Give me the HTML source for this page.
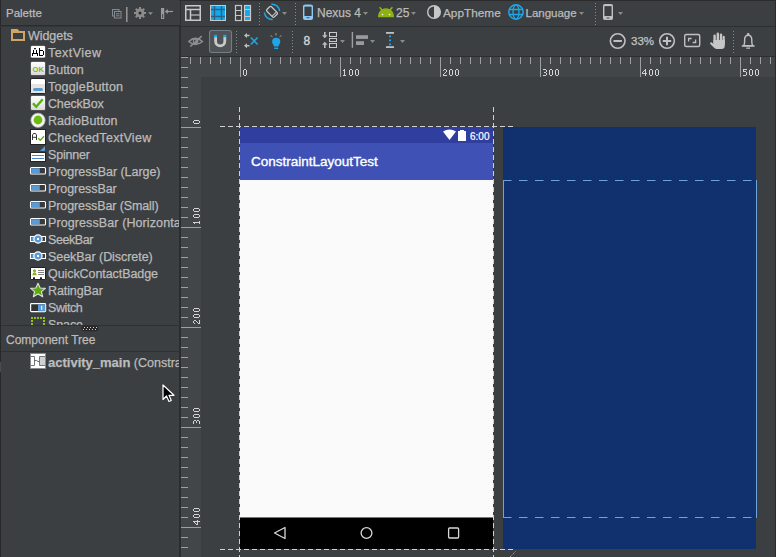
<!DOCTYPE html>
<html><head><meta charset="utf-8">
<style>
*{margin:0;padding:0;box-sizing:border-box}
html,body{width:776px;height:557px;overflow:hidden;background:#3c3f41;font-family:"Liberation Sans",sans-serif;color:#bbbbbb;position:relative}
.a{position:absolute}
.t{position:absolute;white-space:nowrap;font-size:12.5px;line-height:15px;-webkit-text-stroke:0.25px #bbbbbb}
#left{left:0;top:0;width:179px;height:557px;background:#3c3f41;overflow:hidden}
#topline{left:0;top:0;width:776px;height:1px;background:#2b2b2b}
#vdiv{left:179px;top:25px;width:2px;height:532px;background:#2b2d2e}
#vdiv2{left:180px;top:0;width:1px;height:27px;background:#2b2d2e}
.hb{position:absolute;left:0;width:179px;height:1px;background:#2e3032}
#canvas{left:201px;top:77px;width:575px;height:480px;background:#3c3f41}
#hruler{left:181px;top:57px;width:595px;height:21px;background:#434648}
#vruler{left:181px;top:57px;width:20px;height:500px;background:#434648}
.ico{position:absolute}
.rl{font-family:"Liberation Sans",sans-serif;font-size:10px;fill:#d0d0d0;letter-spacing:0.1px}
</style></head><body>
<div id="topline" class="a"></div>

<!-- LEFT PANEL -->
<div id="left" class="a">
  <div class="t" style="left:6px;top:6px;font-size:11.5px">Palette</div>
  <div class="hb" style="top:25px;background:#2a2c2d"></div>
  <div class="t" style="left:28px;top:29px;letter-spacing:-0.054px">Widgets</div>
  <div class="t" style="left:48px;top:46px;letter-spacing:0.446px">TextView</div>
  <div class="t" style="left:48px;top:63px;letter-spacing:-0.065px">Button</div>
  <div class="t" style="left:48px;top:80px;letter-spacing:0.182px">ToggleButton</div>
  <div class="t" style="left:48px;top:97px;letter-spacing:-0.171px">CheckBox</div>
  <div class="t" style="left:48px;top:114px;letter-spacing:0.065px">RadioButton</div>
  <div class="t" style="left:48px;top:131px;letter-spacing:0.289px">CheckedTextView</div>
  <div class="t" style="left:48px;top:148px;letter-spacing:-0.188px">Spinner</div>
  <div class="t" style="left:48px;top:165px;letter-spacing:-0.042px">ProgressBar (Large)</div>
  <div class="t" style="left:48px;top:182px;letter-spacing:-0.08px">ProgressBar</div>
  <div class="t" style="left:48px;top:199px;letter-spacing:-0.106px">ProgressBar (Small)</div>
  <div class="t" style="left:48px;top:216px;letter-spacing:0.1px">ProgressBar (Horizontal)</div>
  <div class="t" style="left:48px;top:233px;letter-spacing:-0.417px">SeekBar</div>
  <div class="t" style="left:48px;top:250px;letter-spacing:-0.049px">SeekBar (Discrete)</div>
  <div class="t" style="left:48px;top:267px;letter-spacing:-0.07px">QuickContactBadge</div>
  <div class="t" style="left:48px;top:284px;letter-spacing:-0.091px">RatingBar</div>
  <div class="t" style="left:48px;top:301px;letter-spacing:-0.415px">Switch</div>
  <div class="a" style="left:0;top:0;width:179px;height:325px;overflow:hidden">
    <div class="t" style="left:48px;top:318px;letter-spacing:-0.1px">Space</div>
  </div>
  <div class="hb" style="top:325px"></div>
  <div class="t" style="left:6px;top:333.4px;font-size:12px">Component Tree</div>
  <div class="hb" style="top:351px"></div>
  <div class="t" style="left:48px;top:355px"><b style="font-size:13px">activity_main</b> (ConstraintLayout)</div>
</div>

<svg class="a" style="left:0;top:0" width="179" height="557">
  <!-- header icons -->
  <rect x="112.5" y="9.5" width="6.5" height="6.5" fill="none" stroke="#7d8b98" stroke-width="1"/>
  <rect x="114.5" y="11.5" width="6.5" height="6.5" fill="#3c3f41" stroke="#8a8a8a" stroke-width="1"/>
  <path d="M116 13.8h3.5M116 15.8h3.5" stroke="#8a8a8a" stroke-width="1"/>
  <rect x="126" y="7" width="1.6" height="15" fill="#a6a6a6" opacity="0.8"/>
  <g fill="#8c8c8c">
    <circle cx="140" cy="13" r="4.4"/>
    <rect x="139" y="7" width="2" height="12"/><rect x="134" y="12" width="12" height="2"/>
    <rect x="139" y="7" width="2" height="12" transform="rotate(45 140 13)"/><rect x="139" y="7" width="2" height="12" transform="rotate(-45 140 13)"/>
  </g>
  <circle cx="140" cy="13" r="1.5" fill="#2b2b2b"/>
  <path d="M148 12.2h5l-2.5 2.8z" fill="#8a8a8a"/>
  <rect x="161" y="8" width="3.2" height="11" fill="#9a9a9a"/>
  <rect x="162.2" y="14" width="0.9" height="4" fill="#3c3f41"/>
  <path d="M165.3 11.5h7.7" stroke="#9a9a9a" stroke-width="1.2"/>
  <path d="M165 11.5l2.8 -2.5v5z" fill="#9a9a9a"/>

  <!-- Widgets folder -->
  <path d="M11 29 H17.6 L19.2 31 H25 V41 H11 Z M13 33 V39 H23 V33 Z" fill="#d2a662" fill-rule="evenodd"/>
  <!-- TextView -->
  <rect x="30.5" y="45.5" width="15" height="12.5" rx="1.5" fill="#fff" stroke="#2a2a2a" stroke-width="0.6"/>
  <g fill="#000"><rect x="34" y="48" width="2" height="1.3" opacity="0.85"/><rect x="33" y="50" width="1" height="3"/><rect x="36" y="50" width="1" height="3"/><rect x="32" y="53" width="6" height="1"/><rect x="32" y="53" width="1" height="3"/><rect x="37" y="53" width="1" height="3"/>
  <rect x="39" y="48" width="1" height="8"/><rect x="39" y="50" width="4" height="1"/><rect x="43" y="51" width="1" height="4"/><rect x="39" y="55" width="4" height="1"/></g>
  <!-- Button -->
  <defs><linearGradient id="gb" x1="0" y1="0" x2="0" y2="1"><stop offset="0" stop-color="#fff"/><stop offset="0.55" stop-color="#ececec"/><stop offset="1" stop-color="#d6d6d6"/></linearGradient></defs>
  <rect x="30.5" y="61.5" width="15" height="14" rx="1.5" fill="url(#gb)" stroke="#2a2a2a" stroke-width="0.6"/>
  <text x="32.6" y="72.4" font-family="Liberation Sans" font-size="7.5" font-weight="bold" fill="#7cb518">OK</text>
  <!-- ToggleButton -->
  <rect x="30.5" y="78.5" width="15" height="15" rx="1.5" fill="#fff" stroke="#222" stroke-width="1"/>
  <rect x="31" y="84" width="14" height="9" fill="#e6e4e1"/>
  <rect x="33" y="88" width="10" height="3" rx="1.5" fill="#5b9bd5"/>
  <!-- CheckBox -->
  <rect x="30.5" y="95.5" width="15" height="15" rx="1.5" fill="url(#gb)" stroke="#2a2a2a" stroke-width="0.6"/>
  <path d="M33 103.2l3.2 3.6l6.5 -7.5" fill="none" stroke="#55b20c" stroke-width="2.4"/>
  <!-- RadioButton -->
  <circle cx="38" cy="120.3" r="7.2" fill="#f4f4f4" stroke="#9a9a9a" stroke-width="0.8"/>
  <circle cx="38" cy="120" r="4.4" fill="#6cbc0f"/>
  <!-- CheckedTextView -->
  <rect x="30.5" y="129.5" width="15" height="15" fill="#fff" stroke="#222" stroke-width="1"/>
  <path d="M32.5 140v-5l1 -1.5h2l1 1.5v5M32.5 137.3h4" fill="none" stroke="#222" stroke-width="0.9"/>
  <path d="M38.3 138.3l2 2l3.7 -4" fill="none" stroke="#6aa51c" stroke-width="1.3"/>
  <!-- Spinner -->
  <path d="M40 151 L45 146 L45 151 Z" fill="#5b9bd5"/>
  <rect x="30.5" y="152.5" width="15" height="9" fill="#fff" stroke="#222" stroke-width="1"/>
  <path d="M32 155.5h12M32 158.5h12" stroke="#4b89c8" stroke-width="1"/>
  <!-- ProgressBars -->
  <g id="pb">
  <rect x="30.5" y="167.5" width="15" height="6.5" rx="1" fill="#3a3a3a" stroke="#fff" stroke-width="1.1"/>
  <rect x="31.2" y="168.2" width="8.6" height="5.1" fill="#5b9bd5"/>
  </g>
  <use href="#pb" y="17"/><use href="#pb" y="34"/><use href="#pb" y="51"/>
  <!-- SeekBars -->
  <g id="sb">
  <rect x="30.5" y="236.5" width="15" height="5" fill="#3a3a3a" stroke="#fff" stroke-width="1.1"/>
  <rect x="31.2" y="237.2" width="4" height="3.6" fill="#5b9bd5"/>
  <circle cx="38" cy="239" r="4.1" fill="#5b9bd5" stroke="#fff" stroke-width="1.2"/>
  <rect x="37" y="238" width="2" height="2" fill="#fff"/>
  </g>
  <use href="#sb" y="17"/>
  <!-- QuickContactBadge -->
  <rect x="30.5" y="267.5" width="15" height="12" rx="0.5" fill="#fff" stroke="#222" stroke-width="1"/>
  <circle cx="34.5" cy="270.8" r="1.6" fill="#8cb21a"/>
  <path d="M32.3 275.3 Q32.5 272.5 34.5 272.3 Q36.5 272.5 36.7 275.3 Z" fill="#8cb21a"/>
  <path d="M38 270.5h6M38 272.5h6M38 274.5h6" stroke="#777" stroke-width="0.9"/>
  <path d="M33 279.5v-1.5a1 1 0 0 1 2 0v1.5M40 279.5v-1.5a1 1 0 0 1 2 0v1.5" fill="#222"/>
  <!-- RatingBar -->
  <path d="M38 283.2 L40.2 288 L45.4 288.4 L41.4 291.7 L42.7 296.8 L38 294 L33.3 296.8 L34.6 291.7 L30.6 288.4 L35.8 288 Z" fill="#5bab0c" stroke="#e0e0e0" stroke-width="1.1" stroke-linejoin="round"/>
  <!-- Switch -->
  <rect x="30.6" y="303.6" width="15" height="8" rx="0.8" fill="#333" stroke="#fff" stroke-width="1.2"/>
  <rect x="38" y="304.3" width="7.3" height="7" fill="#5b9bd5"/>
  <rect x="41.2" y="305.8" width="1" height="4" fill="#fff"/>
  <!-- Space -->
  <g fill="#95c10f">
   <rect x="31" y="317" width="2" height="2"/><rect x="34" y="317" width="2" height="2"/><rect x="37" y="317" width="2" height="2"/><rect x="40" y="317" width="2" height="2"/><rect x="43" y="317" width="2" height="2"/>
   <rect x="31" y="320" width="2" height="2"/><rect x="43" y="320" width="2" height="2"/><rect x="31" y="323" width="2" height="2"/><rect x="43" y="323" width="2" height="2"/>
  </g>
  <!-- splitter grip -->
  <rect x="81.5" y="325.8" width="17" height="5.5" rx="2.7" fill="#242526" opacity="0.85"/><g fill="#d4d4d4"><rect x="84" y="327" width="1" height="1"/><rect x="87" y="327" width="1" height="1"/><rect x="90" y="327" width="1" height="1"/><rect x="93" y="327" width="1" height="1"/><rect x="96" y="327" width="1" height="1"/><rect x="83" y="329" width="1" height="1"/><rect x="86" y="329" width="1" height="1"/><rect x="89" y="329" width="1" height="1"/><rect x="92" y="329" width="1" height="1"/><rect x="95" y="329" width="1" height="1"/></g>
  <!-- activity_main icon -->
  <rect x="30.5" y="353.5" width="15" height="15" fill="#fff" stroke="#8a8a8a" stroke-width="1"/>
  <rect x="40" y="357" width="5" height="8" fill="#d0d0d0"/>
  <path d="M31 356.5h3.5v9h-3.5M45 356.5h-5.5v9h5.5" fill="none" stroke="#777" stroke-width="1"/>
  <path d="M34.5 360.5h2l1.5 1h1.5" fill="none" stroke="#666" stroke-width="1"/>
</svg>
<div class="a" style="left:0;top:0;width:1px;height:557px;background:#282828"></div>
<div class="a" style="left:0;top:26px;width:179px;height:1px;background:#333537"></div>
<div class="a" style="left:0;top:362px;width:1px;height:10px;background:#4a4d4f"></div>
<div id="vdiv" class="a"></div><div id="vdiv2" class="a"></div>


<!-- TOOLBAR -->
<div class="a" style="left:181px;top:26px;width:595px;height:1px;background:#2d2f30"></div>
<div class="a" style="left:181px;top:56px;width:595px;height:1px;background:#2d2f30"></div>
<svg class="a" style="left:0;top:0" width="776" height="56">
  <!-- row1: design -->
  <rect x="185.75" y="5.75" width="14.5" height="14.5" fill="none" stroke="#c8c8c8" stroke-width="1.5"/>
  <line x1="186" y1="9.5" x2="200" y2="9.5" stroke="#c8c8c8" stroke-width="1.5"/>
  <line x1="190.5" y1="9.5" x2="190.5" y2="20" stroke="#c8c8c8" stroke-width="1.5"/>
  <line x1="191" y1="15" x2="200" y2="15" stroke="#a8a8a8" stroke-width="1.5"/>
  <!-- blueprint -->
  <rect x="210.5" y="5.5" width="15" height="15" fill="#14a7ec" stroke="#c8c8c8" stroke-width="1"/>
  <path d="M214.5 6v14M221.5 6v14M211 9.5h14M211 16.5h14" stroke="#2a6286" stroke-width="1.4"/>
  <!-- both -->
  <rect x="235.5" y="5.5" width="6" height="15" fill="none" stroke="#c8c8c8" stroke-width="1.2"/>
  <path d="M235.5 10.5h6M235.5 15.5h6" stroke="#c8c8c8" stroke-width="1.2"/>
  <rect x="244.5" y="5.5" width="6" height="15" fill="#14a7ec" stroke="#c8c8c8" stroke-width="1.2"/>
  <path d="M244.5 9.5h6M244.5 16.5h6" stroke="#c8c8c8" stroke-width="1.2"/>
  <!-- dotted seps -->
  <path d="M259.5 3v22M295.5 3v22M595.5 3v22" stroke="#8a8a8a" stroke-width="1" stroke-dasharray="1 2"/>
  <!-- rotate -->
  <g transform="rotate(-45 272 11.85)"><rect x="268.8" y="6.6" width="6.4" height="10.5" rx="1.3" fill="none" stroke="#c8c8c8" stroke-width="1.3"/><path d="M268.8 15h6.4" stroke="#c8c8c8" stroke-width="1"/></g>
  <path d="M271.3 4.2 A7.6 7.6 0 0 1 279.6 11.1" fill="none" stroke="#1ea6e6" stroke-width="1.5"/>
  <path d="M272.7 19.4 A7.6 7.6 0 0 1 264.4 12.5" fill="none" stroke="#1ea6e6" stroke-width="1.5"/>
  <path d="M282 12h5l-2.5 3z" fill="#8a8a8a"/>
  <!-- phone blue -->
  <rect x="303.7" y="5.2" width="8.6" height="14" rx="1.8" fill="none" stroke="#8ec9f5" stroke-width="1.4"/>
  <rect x="303.5" y="16" width="9" height="3.4" rx="1" fill="#8ec9f5"/><rect x="306.5" y="17.3" width="3" height="0.9" fill="#3c3f41"/>
  <rect x="303.5" y="5" width="9" height="1.6" fill="#8ec9f5"/>
  <path d="M363 12h5l-2.5 3z" fill="#8a8a8a"/>
  <!-- android -->
  <path d="M378 17.2 C378 11.8 381.2 8.3 386 8.3 C390.8 8.3 394 11.8 394 17.2 Z" fill="#8fb113"/>
  <path d="M379.6 7.2l2.6 3M392.4 7.2l-2.6 3" stroke="#8fb113" stroke-width="1.6"/>
  <rect x="381.8" y="13.9" width="1.3" height="1.3" fill="#fff"/><rect x="388.9" y="13.9" width="1.3" height="1.3" fill="#fff"/>
  <path d="M411 12h5l-2.5 3z" fill="#8a8a8a"/>
  <!-- theme -->
  <circle cx="434" cy="12" r="6.3" fill="none" stroke="#c8c8c8" stroke-width="1.4"/>
  <path d="M434 5.7 A6.3 6.3 0 0 1 434 18.3 Z" fill="#c8c8c8"/>
  <!-- globe -->
  <circle cx="516" cy="12" r="7.2" fill="none" stroke="#1ea6e6" stroke-width="1.5"/>
  <ellipse cx="516" cy="12" rx="3" ry="7.2" fill="none" stroke="#1ea6e6" stroke-width="1.3"/>
  <path d="M509 9.5h14M509 14.5h14" stroke="#1ea6e6" stroke-width="1.3"/>
  <path d="M579 12h5l-2.5 3z" fill="#8a8a8a"/>
  <!-- phone gray -->
  <rect x="603.7" y="4.7" width="8.6" height="14.6" rx="1.8" fill="none" stroke="#c0c0c0" stroke-width="1.4"/>
  <rect x="603.5" y="16" width="9" height="3.8" rx="1" fill="#c0c0c0"/><rect x="606.5" y="17.6" width="3" height="0.9" fill="#3c3f41"/>
  <rect x="603.5" y="4.5" width="9" height="1.6" fill="#c0c0c0"/>
  <path d="M618 12h5l-2.5 3z" fill="#8a8a8a"/>

  <!-- row2: eye -->
  <path d="M188.8 41.5 Q195.5 35.2 202.4 41.5 Q195.5 47.6 188.8 41.5Z" fill="none" stroke="#8e8e8e" stroke-width="1.5"/>
  <circle cx="195.6" cy="41.3" r="2.3" fill="none" stroke="#8e8e8e" stroke-width="1.1"/>
  <path d="M195.6 39v4.6a2.3 2.3 0 0 0 0-4.6z" fill="#8e8e8e"/>
  <path d="M190.3 46.5l11.4 -10.3" stroke="#8e8e8e" stroke-width="1.6"/>
  <!-- magnet button -->
  <rect x="209.5" y="30.5" width="22" height="22" rx="2.5" fill="#4f5355" stroke="#727e87" stroke-width="1.1"/>
  <path d="M215.6 37v4.2a4.6 4.6 0 0 0 9.2 0v-4.2" fill="none" stroke="#cacaca" stroke-width="2.8"/>
  <rect x="214.1" y="34.8" width="3" height="2.4" fill="#1ea6e6"/><rect x="223.3" y="34.8" width="3" height="2.4" fill="#1ea6e6"/>
  <path d="M236.5 31v22M292.5 31v22M733.5 31v22" stroke="#8a8a8a" stroke-width="1" stroke-dasharray="1 2"/>
  <!-- clear constraints -->
  <path d="M244 35.5l3 -2.5v1.8h2.5v1.4h-2.5v1.8z M244 45.8l3 -2.5v1.8h2.5v1.4h-2.5v1.8z" fill="#bdbdbd"/>
  <path d="M250.8 37.5l6.8 7M257.6 37.5l-6.8 7" stroke="#1ea6e6" stroke-width="1.6"/>
  <!-- bulb -->
  <path d="M276.2 37.7a4.1 4.1 0 0 1 4.1 4.1c0 1.9-1.3 2.7-1.7 3.9v0.9h-4.8v-0.9c-0.4-1.2-1.7-2-1.7-3.9a4.1 4.1 0 0 1 4.1-4.1z" fill="#1ea6e6"/>
  <rect x="274.2" y="47.6" width="4" height="1.4" fill="#1ea6e6"/>
  <path d="M276 33v2.5M270.5 35.5l2 1.3M281.5 35.5l-2 1.3" stroke="#9a9a9a" stroke-width="1"/>
  <!-- 8 -->
  <text x="303.6" y="45.2" font-family="Liberation Sans" font-size="12" fill="#d4d4d4" stroke="#d4d4d4" stroke-width="0.4">8</text>
  <!-- pack -->
  <path d="M324 32h1.6v3.2h2l-2.8 3l-2.8-3h2z M324 48h1.6v-3.2h2l-2.8-3l-2.8 3h2z" fill="#bdbdbd"/>
  <rect x="329.5" y="32.5" width="7" height="4" fill="none" stroke="#c8c8c8" stroke-width="1"/>
  <rect x="329.5" y="38.5" width="7" height="3" fill="none" stroke="#c8c8c8" stroke-width="1"/>
  <rect x="329.5" y="43.5" width="7" height="4" fill="none" stroke="#c8c8c8" stroke-width="1"/>
  <path d="M340 40h5l-2.5 3z" fill="#8a8a8a"/>
  <!-- align -->
  <rect x="351.7" y="32" width="1.4" height="15.8" fill="#a0a0a0"/>
  <rect x="356" y="35.2" width="12" height="3.7" fill="#9a9a9a"/>
  <rect x="356" y="41.2" width="8" height="3.8" fill="#9a9a9a"/>
  <path d="M370 40h5l-2.5 3z" fill="#8a8a8a"/>
  <!-- guideline -->
  <rect x="386" y="32" width="8" height="1.8" fill="#c0c0c0"/><rect x="386" y="46.2" width="8" height="1.8" fill="#c0c0c0"/>
  <rect x="389" y="35.5" width="2" height="1.7" fill="#1ea6e6"/><rect x="389" y="39.5" width="2" height="1.7" fill="#1ea6e6"/><rect x="389" y="43.5" width="2" height="1.7" fill="#1ea6e6"/>
  <path d="M400 40h5l-2.5 3z" fill="#8a8a8a"/>
  <!-- zoom -->
  <circle cx="617.7" cy="41" r="7.3" fill="none" stroke="#c0c0c0" stroke-width="1.6"/>
  <rect x="613.5" y="40" width="8.4" height="2" fill="#c0c0c0"/>
  <circle cx="667" cy="41" r="7.3" fill="none" stroke="#c0c0c0" stroke-width="1.6"/>
  <rect x="662.8" y="40" width="8.4" height="2" fill="#c0c0c0"/><rect x="666" y="36.8" width="2" height="8.4" fill="#c0c0c0"/>
  <text x="631" y="45.2" font-family="Liberation Sans" font-size="11.5" fill="#c4c4c4" stroke="#c4c4c4" stroke-width="0.25">33%</text>
  <!-- fit -->
  <rect x="684.7" y="34.5" width="15" height="12" rx="1.5" fill="none" stroke="#c0c0c0" stroke-width="1.4"/>
  <path d="M688.6 41.5v-3h3M695.6 39.5v3h-3" fill="none" stroke="#c0c0c0" stroke-width="1.3"/>
  <!-- hand -->
  <g fill="#c6c6c6">
  <rect x="713.4" y="34.6" width="2.4" height="9" rx="1.2"/>
  <rect x="716.6" y="32.6" width="2.4" height="10" rx="1.2"/>
  <rect x="719.8" y="33.6" width="2.4" height="10" rx="1.2"/>
  <rect x="722.6" y="35.8" width="2.2" height="9" rx="1.1"/>
  <path d="M713.4 40 H724.8 V45.5 Q724.8 49 721.5 49 H716.5 Q715 49 713.8 47.6 L710.3 44 Q709.4 42.8 710.6 42.4 Q711.5 42.1 712.4 42.9 L713.4 43.8 Z"/>
  </g>
  <!-- bell -->
  <path d="M743.6 45.6 Q744.6 44.6 744.6 42 V40 Q744.6 35.2 748.2 35.2 Q751.8 35.2 751.8 40 V42 Q751.8 44.6 752.8 45.6 Z" fill="none" stroke="#c0c0c0" stroke-width="1.4" stroke-linejoin="round"/>
  <rect x="741.6" y="45.3" width="13.2" height="1.4" rx="0.7" fill="#c0c0c0"/>
  <rect x="747.2" y="33" width="2" height="2" fill="#c0c0c0"/>
  <rect x="746.2" y="47.6" width="4" height="1.2" rx="0.6" fill="#c0c0c0"/>
</svg>
<div class="t" style="left:317px;top:6px;font-size:12px">Nexus 4</div>
<div class="t" style="left:396px;top:6px;font-size:12px">25</div>
<div class="t" style="left:443px;top:6px;font-size:11.8px">AppTheme</div>
<div class="t" style="left:525.5px;top:6px;font-size:11.5px">Language</div>

<!-- RULERS / CANVAS -->
<div id="hruler" class="a"></div>
<div id="vruler" class="a"></div>
<div id="canvas" class="a"></div>
<svg class="a" style="left:0;top:0;will-change:transform" width="776" height="557"><rect x="190" y="57" width="1" height="7" fill="#9d9fa0"/><rect x="200" y="57" width="1" height="7" fill="#9d9fa0"/><rect x="210" y="57" width="1" height="7" fill="#9d9fa0"/><rect x="220" y="57" width="1" height="7" fill="#9d9fa0"/><rect x="230" y="57" width="1" height="7" fill="#9d9fa0"/><rect x="240" y="57" width="1" height="20" fill="#9d9fa0"/><rect x="250" y="57" width="1" height="7" fill="#9d9fa0"/><rect x="260" y="57" width="1" height="7" fill="#9d9fa0"/><rect x="270" y="57" width="1" height="7" fill="#9d9fa0"/><rect x="280" y="57" width="1" height="7" fill="#9d9fa0"/><rect x="290" y="57" width="1" height="7" fill="#9d9fa0"/><rect x="300" y="57" width="1" height="7" fill="#9d9fa0"/><rect x="310" y="57" width="1" height="7" fill="#9d9fa0"/><rect x="320" y="57" width="1" height="7" fill="#9d9fa0"/><rect x="330" y="57" width="1" height="7" fill="#9d9fa0"/><rect x="340" y="57" width="1" height="20" fill="#9d9fa0"/><rect x="350" y="57" width="1" height="7" fill="#9d9fa0"/><rect x="360" y="57" width="1" height="7" fill="#9d9fa0"/><rect x="370" y="57" width="1" height="7" fill="#9d9fa0"/><rect x="380" y="57" width="1" height="7" fill="#9d9fa0"/><rect x="390" y="57" width="1" height="7" fill="#9d9fa0"/><rect x="400" y="57" width="1" height="7" fill="#9d9fa0"/><rect x="410" y="57" width="1" height="7" fill="#9d9fa0"/><rect x="420" y="57" width="1" height="7" fill="#9d9fa0"/><rect x="430" y="57" width="1" height="7" fill="#9d9fa0"/><rect x="440" y="57" width="1" height="20" fill="#9d9fa0"/><rect x="450" y="57" width="1" height="7" fill="#9d9fa0"/><rect x="460" y="57" width="1" height="7" fill="#9d9fa0"/><rect x="470" y="57" width="1" height="7" fill="#9d9fa0"/><rect x="480" y="57" width="1" height="7" fill="#9d9fa0"/><rect x="490" y="57" width="1" height="7" fill="#9d9fa0"/><rect x="500" y="57" width="1" height="7" fill="#9d9fa0"/><rect x="510" y="57" width="1" height="7" fill="#9d9fa0"/><rect x="520" y="57" width="1" height="7" fill="#9d9fa0"/><rect x="530" y="57" width="1" height="7" fill="#9d9fa0"/><rect x="540" y="57" width="1" height="20" fill="#9d9fa0"/><rect x="550" y="57" width="1" height="7" fill="#9d9fa0"/><rect x="560" y="57" width="1" height="7" fill="#9d9fa0"/><rect x="570" y="57" width="1" height="7" fill="#9d9fa0"/><rect x="580" y="57" width="1" height="7" fill="#9d9fa0"/><rect x="590" y="57" width="1" height="7" fill="#9d9fa0"/><rect x="600" y="57" width="1" height="7" fill="#9d9fa0"/><rect x="610" y="57" width="1" height="7" fill="#9d9fa0"/><rect x="620" y="57" width="1" height="7" fill="#9d9fa0"/><rect x="630" y="57" width="1" height="7" fill="#9d9fa0"/><rect x="640" y="57" width="1" height="20" fill="#9d9fa0"/><rect x="650" y="57" width="1" height="7" fill="#9d9fa0"/><rect x="660" y="57" width="1" height="7" fill="#9d9fa0"/><rect x="670" y="57" width="1" height="7" fill="#9d9fa0"/><rect x="680" y="57" width="1" height="7" fill="#9d9fa0"/><rect x="690" y="57" width="1" height="7" fill="#9d9fa0"/><rect x="700" y="57" width="1" height="7" fill="#9d9fa0"/><rect x="710" y="57" width="1" height="7" fill="#9d9fa0"/><rect x="720" y="57" width="1" height="7" fill="#9d9fa0"/><rect x="730" y="57" width="1" height="7" fill="#9d9fa0"/><rect x="740" y="57" width="1" height="20" fill="#9d9fa0"/><rect x="750" y="57" width="1" height="7" fill="#9d9fa0"/><rect x="760" y="57" width="1" height="7" fill="#9d9fa0"/><rect x="770" y="57" width="1" height="7" fill="#9d9fa0"/><rect x="181" y="57" width="7" height="1" fill="#9d9fa0"/><rect x="181" y="67" width="7" height="1" fill="#9d9fa0"/><rect x="181" y="77" width="7" height="1" fill="#9d9fa0"/><rect x="181" y="87" width="7" height="1" fill="#9d9fa0"/><rect x="181" y="97" width="7" height="1" fill="#9d9fa0"/><rect x="181" y="107" width="7" height="1" fill="#9d9fa0"/><rect x="181" y="117" width="7" height="1" fill="#9d9fa0"/><rect x="181" y="127" width="20" height="1" fill="#9d9fa0"/><rect x="181" y="137" width="7" height="1" fill="#9d9fa0"/><rect x="181" y="147" width="7" height="1" fill="#9d9fa0"/><rect x="181" y="157" width="7" height="1" fill="#9d9fa0"/><rect x="181" y="167" width="7" height="1" fill="#9d9fa0"/><rect x="181" y="177" width="7" height="1" fill="#9d9fa0"/><rect x="181" y="187" width="7" height="1" fill="#9d9fa0"/><rect x="181" y="197" width="7" height="1" fill="#9d9fa0"/><rect x="181" y="207" width="7" height="1" fill="#9d9fa0"/><rect x="181" y="217" width="7" height="1" fill="#9d9fa0"/><rect x="181" y="227" width="20" height="1" fill="#9d9fa0"/><rect x="181" y="237" width="7" height="1" fill="#9d9fa0"/><rect x="181" y="247" width="7" height="1" fill="#9d9fa0"/><rect x="181" y="257" width="7" height="1" fill="#9d9fa0"/><rect x="181" y="267" width="7" height="1" fill="#9d9fa0"/><rect x="181" y="277" width="7" height="1" fill="#9d9fa0"/><rect x="181" y="287" width="7" height="1" fill="#9d9fa0"/><rect x="181" y="297" width="7" height="1" fill="#9d9fa0"/><rect x="181" y="307" width="7" height="1" fill="#9d9fa0"/><rect x="181" y="317" width="7" height="1" fill="#9d9fa0"/><rect x="181" y="327" width="20" height="1" fill="#9d9fa0"/><rect x="181" y="337" width="7" height="1" fill="#9d9fa0"/><rect x="181" y="347" width="7" height="1" fill="#9d9fa0"/><rect x="181" y="357" width="7" height="1" fill="#9d9fa0"/><rect x="181" y="367" width="7" height="1" fill="#9d9fa0"/><rect x="181" y="377" width="7" height="1" fill="#9d9fa0"/><rect x="181" y="387" width="7" height="1" fill="#9d9fa0"/><rect x="181" y="397" width="7" height="1" fill="#9d9fa0"/><rect x="181" y="407" width="7" height="1" fill="#9d9fa0"/><rect x="181" y="417" width="7" height="1" fill="#9d9fa0"/><rect x="181" y="427" width="20" height="1" fill="#9d9fa0"/><rect x="181" y="437" width="7" height="1" fill="#9d9fa0"/><rect x="181" y="447" width="7" height="1" fill="#9d9fa0"/><rect x="181" y="457" width="7" height="1" fill="#9d9fa0"/><rect x="181" y="467" width="7" height="1" fill="#9d9fa0"/><rect x="181" y="477" width="7" height="1" fill="#9d9fa0"/><rect x="181" y="487" width="7" height="1" fill="#9d9fa0"/><rect x="181" y="497" width="7" height="1" fill="#9d9fa0"/><rect x="181" y="507" width="7" height="1" fill="#9d9fa0"/><rect x="181" y="517" width="7" height="1" fill="#9d9fa0"/><rect x="181" y="527" width="20" height="1" fill="#9d9fa0"/><rect x="181" y="537" width="7" height="1" fill="#9d9fa0"/><rect x="181" y="547" width="7" height="1" fill="#9d9fa0"/><g fill="#d2d2d2"><rect x="244" y="69" width="1" height="1"/><rect x="245" y="69" width="1" height="1"/><rect x="243" y="70" width="1" height="1"/><rect x="246" y="70" width="1" height="1"/><rect x="243" y="71" width="1" height="1"/><rect x="246" y="71" width="1" height="1"/><rect x="243" y="72" width="1" height="1"/><rect x="246" y="72" width="1" height="1"/><rect x="243" y="73" width="1" height="1"/><rect x="246" y="73" width="1" height="1"/><rect x="243" y="74" width="1" height="1"/><rect x="246" y="74" width="1" height="1"/><rect x="244" y="75" width="1" height="1"/><rect x="245" y="75" width="1" height="1"/><rect x="344" y="69" width="1" height="1"/><rect x="343" y="70" width="1" height="1"/><rect x="344" y="70" width="1" height="1"/><rect x="344" y="71" width="1" height="1"/><rect x="344" y="72" width="1" height="1"/><rect x="344" y="73" width="1" height="1"/><rect x="344" y="74" width="1" height="1"/><rect x="343" y="75" width="1" height="1"/><rect x="344" y="75" width="1" height="1"/><rect x="345" y="75" width="1" height="1"/><rect x="350" y="69" width="1" height="1"/><rect x="351" y="69" width="1" height="1"/><rect x="349" y="70" width="1" height="1"/><rect x="352" y="70" width="1" height="1"/><rect x="349" y="71" width="1" height="1"/><rect x="352" y="71" width="1" height="1"/><rect x="349" y="72" width="1" height="1"/><rect x="352" y="72" width="1" height="1"/><rect x="349" y="73" width="1" height="1"/><rect x="352" y="73" width="1" height="1"/><rect x="349" y="74" width="1" height="1"/><rect x="352" y="74" width="1" height="1"/><rect x="350" y="75" width="1" height="1"/><rect x="351" y="75" width="1" height="1"/><rect x="356" y="69" width="1" height="1"/><rect x="357" y="69" width="1" height="1"/><rect x="355" y="70" width="1" height="1"/><rect x="358" y="70" width="1" height="1"/><rect x="355" y="71" width="1" height="1"/><rect x="358" y="71" width="1" height="1"/><rect x="355" y="72" width="1" height="1"/><rect x="358" y="72" width="1" height="1"/><rect x="355" y="73" width="1" height="1"/><rect x="358" y="73" width="1" height="1"/><rect x="355" y="74" width="1" height="1"/><rect x="358" y="74" width="1" height="1"/><rect x="356" y="75" width="1" height="1"/><rect x="357" y="75" width="1" height="1"/><rect x="444" y="69" width="1" height="1"/><rect x="445" y="69" width="1" height="1"/><rect x="443" y="70" width="1" height="1"/><rect x="446" y="70" width="1" height="1"/><rect x="446" y="71" width="1" height="1"/><rect x="445" y="72" width="1" height="1"/><rect x="444" y="73" width="1" height="1"/><rect x="443" y="74" width="1" height="1"/><rect x="443" y="75" width="1" height="1"/><rect x="444" y="75" width="1" height="1"/><rect x="445" y="75" width="1" height="1"/><rect x="446" y="75" width="1" height="1"/><rect x="450" y="69" width="1" height="1"/><rect x="451" y="69" width="1" height="1"/><rect x="449" y="70" width="1" height="1"/><rect x="452" y="70" width="1" height="1"/><rect x="449" y="71" width="1" height="1"/><rect x="452" y="71" width="1" height="1"/><rect x="449" y="72" width="1" height="1"/><rect x="452" y="72" width="1" height="1"/><rect x="449" y="73" width="1" height="1"/><rect x="452" y="73" width="1" height="1"/><rect x="449" y="74" width="1" height="1"/><rect x="452" y="74" width="1" height="1"/><rect x="450" y="75" width="1" height="1"/><rect x="451" y="75" width="1" height="1"/><rect x="456" y="69" width="1" height="1"/><rect x="457" y="69" width="1" height="1"/><rect x="455" y="70" width="1" height="1"/><rect x="458" y="70" width="1" height="1"/><rect x="455" y="71" width="1" height="1"/><rect x="458" y="71" width="1" height="1"/><rect x="455" y="72" width="1" height="1"/><rect x="458" y="72" width="1" height="1"/><rect x="455" y="73" width="1" height="1"/><rect x="458" y="73" width="1" height="1"/><rect x="455" y="74" width="1" height="1"/><rect x="458" y="74" width="1" height="1"/><rect x="456" y="75" width="1" height="1"/><rect x="457" y="75" width="1" height="1"/><rect x="543" y="69" width="1" height="1"/><rect x="544" y="69" width="1" height="1"/><rect x="545" y="69" width="1" height="1"/><rect x="546" y="70" width="1" height="1"/><rect x="546" y="71" width="1" height="1"/><rect x="544" y="72" width="1" height="1"/><rect x="545" y="72" width="1" height="1"/><rect x="546" y="73" width="1" height="1"/><rect x="546" y="74" width="1" height="1"/><rect x="543" y="75" width="1" height="1"/><rect x="544" y="75" width="1" height="1"/><rect x="545" y="75" width="1" height="1"/><rect x="550" y="69" width="1" height="1"/><rect x="551" y="69" width="1" height="1"/><rect x="549" y="70" width="1" height="1"/><rect x="552" y="70" width="1" height="1"/><rect x="549" y="71" width="1" height="1"/><rect x="552" y="71" width="1" height="1"/><rect x="549" y="72" width="1" height="1"/><rect x="552" y="72" width="1" height="1"/><rect x="549" y="73" width="1" height="1"/><rect x="552" y="73" width="1" height="1"/><rect x="549" y="74" width="1" height="1"/><rect x="552" y="74" width="1" height="1"/><rect x="550" y="75" width="1" height="1"/><rect x="551" y="75" width="1" height="1"/><rect x="556" y="69" width="1" height="1"/><rect x="557" y="69" width="1" height="1"/><rect x="555" y="70" width="1" height="1"/><rect x="558" y="70" width="1" height="1"/><rect x="555" y="71" width="1" height="1"/><rect x="558" y="71" width="1" height="1"/><rect x="555" y="72" width="1" height="1"/><rect x="558" y="72" width="1" height="1"/><rect x="555" y="73" width="1" height="1"/><rect x="558" y="73" width="1" height="1"/><rect x="555" y="74" width="1" height="1"/><rect x="558" y="74" width="1" height="1"/><rect x="556" y="75" width="1" height="1"/><rect x="557" y="75" width="1" height="1"/><rect x="645" y="69" width="1" height="1"/><rect x="644" y="70" width="1" height="1"/><rect x="645" y="70" width="1" height="1"/><rect x="643" y="71" width="1" height="1"/><rect x="645" y="71" width="1" height="1"/><rect x="642" y="72" width="1" height="1"/><rect x="645" y="72" width="1" height="1"/><rect x="642" y="73" width="1" height="1"/><rect x="643" y="73" width="1" height="1"/><rect x="644" y="73" width="1" height="1"/><rect x="645" y="73" width="1" height="1"/><rect x="646" y="73" width="1" height="1"/><rect x="645" y="74" width="1" height="1"/><rect x="645" y="75" width="1" height="1"/><rect x="650" y="69" width="1" height="1"/><rect x="651" y="69" width="1" height="1"/><rect x="649" y="70" width="1" height="1"/><rect x="652" y="70" width="1" height="1"/><rect x="649" y="71" width="1" height="1"/><rect x="652" y="71" width="1" height="1"/><rect x="649" y="72" width="1" height="1"/><rect x="652" y="72" width="1" height="1"/><rect x="649" y="73" width="1" height="1"/><rect x="652" y="73" width="1" height="1"/><rect x="649" y="74" width="1" height="1"/><rect x="652" y="74" width="1" height="1"/><rect x="650" y="75" width="1" height="1"/><rect x="651" y="75" width="1" height="1"/><rect x="656" y="69" width="1" height="1"/><rect x="657" y="69" width="1" height="1"/><rect x="655" y="70" width="1" height="1"/><rect x="658" y="70" width="1" height="1"/><rect x="655" y="71" width="1" height="1"/><rect x="658" y="71" width="1" height="1"/><rect x="655" y="72" width="1" height="1"/><rect x="658" y="72" width="1" height="1"/><rect x="655" y="73" width="1" height="1"/><rect x="658" y="73" width="1" height="1"/><rect x="655" y="74" width="1" height="1"/><rect x="658" y="74" width="1" height="1"/><rect x="656" y="75" width="1" height="1"/><rect x="657" y="75" width="1" height="1"/><rect x="743" y="69" width="1" height="1"/><rect x="744" y="69" width="1" height="1"/><rect x="745" y="69" width="1" height="1"/><rect x="746" y="69" width="1" height="1"/><rect x="743" y="70" width="1" height="1"/><rect x="743" y="71" width="1" height="1"/><rect x="744" y="71" width="1" height="1"/><rect x="745" y="71" width="1" height="1"/><rect x="746" y="72" width="1" height="1"/><rect x="746" y="73" width="1" height="1"/><rect x="746" y="74" width="1" height="1"/><rect x="743" y="75" width="1" height="1"/><rect x="744" y="75" width="1" height="1"/><rect x="745" y="75" width="1" height="1"/><rect x="750" y="69" width="1" height="1"/><rect x="751" y="69" width="1" height="1"/><rect x="749" y="70" width="1" height="1"/><rect x="752" y="70" width="1" height="1"/><rect x="749" y="71" width="1" height="1"/><rect x="752" y="71" width="1" height="1"/><rect x="749" y="72" width="1" height="1"/><rect x="752" y="72" width="1" height="1"/><rect x="749" y="73" width="1" height="1"/><rect x="752" y="73" width="1" height="1"/><rect x="749" y="74" width="1" height="1"/><rect x="752" y="74" width="1" height="1"/><rect x="750" y="75" width="1" height="1"/><rect x="751" y="75" width="1" height="1"/><rect x="756" y="69" width="1" height="1"/><rect x="757" y="69" width="1" height="1"/><rect x="755" y="70" width="1" height="1"/><rect x="758" y="70" width="1" height="1"/><rect x="755" y="71" width="1" height="1"/><rect x="758" y="71" width="1" height="1"/><rect x="755" y="72" width="1" height="1"/><rect x="758" y="72" width="1" height="1"/><rect x="755" y="73" width="1" height="1"/><rect x="758" y="73" width="1" height="1"/><rect x="755" y="74" width="1" height="1"/><rect x="758" y="74" width="1" height="1"/><rect x="756" y="75" width="1" height="1"/><rect x="757" y="75" width="1" height="1"/><rect x="193" y="122" width="1" height="1"/><rect x="193" y="121" width="1" height="1"/><rect x="194" y="123" width="1" height="1"/><rect x="194" y="120" width="1" height="1"/><rect x="195" y="123" width="1" height="1"/><rect x="195" y="120" width="1" height="1"/><rect x="196" y="123" width="1" height="1"/><rect x="196" y="120" width="1" height="1"/><rect x="197" y="123" width="1" height="1"/><rect x="197" y="120" width="1" height="1"/><rect x="198" y="123" width="1" height="1"/><rect x="198" y="120" width="1" height="1"/><rect x="199" y="122" width="1" height="1"/><rect x="199" y="121" width="1" height="1"/><rect x="193" y="222" width="1" height="1"/><rect x="194" y="223" width="1" height="1"/><rect x="194" y="222" width="1" height="1"/><rect x="195" y="222" width="1" height="1"/><rect x="196" y="222" width="1" height="1"/><rect x="197" y="222" width="1" height="1"/><rect x="198" y="222" width="1" height="1"/><rect x="199" y="223" width="1" height="1"/><rect x="199" y="222" width="1" height="1"/><rect x="199" y="221" width="1" height="1"/><rect x="193" y="216" width="1" height="1"/><rect x="193" y="215" width="1" height="1"/><rect x="194" y="217" width="1" height="1"/><rect x="194" y="214" width="1" height="1"/><rect x="195" y="217" width="1" height="1"/><rect x="195" y="214" width="1" height="1"/><rect x="196" y="217" width="1" height="1"/><rect x="196" y="214" width="1" height="1"/><rect x="197" y="217" width="1" height="1"/><rect x="197" y="214" width="1" height="1"/><rect x="198" y="217" width="1" height="1"/><rect x="198" y="214" width="1" height="1"/><rect x="199" y="216" width="1" height="1"/><rect x="199" y="215" width="1" height="1"/><rect x="193" y="210" width="1" height="1"/><rect x="193" y="209" width="1" height="1"/><rect x="194" y="211" width="1" height="1"/><rect x="194" y="208" width="1" height="1"/><rect x="195" y="211" width="1" height="1"/><rect x="195" y="208" width="1" height="1"/><rect x="196" y="211" width="1" height="1"/><rect x="196" y="208" width="1" height="1"/><rect x="197" y="211" width="1" height="1"/><rect x="197" y="208" width="1" height="1"/><rect x="198" y="211" width="1" height="1"/><rect x="198" y="208" width="1" height="1"/><rect x="199" y="210" width="1" height="1"/><rect x="199" y="209" width="1" height="1"/><rect x="193" y="322" width="1" height="1"/><rect x="193" y="321" width="1" height="1"/><rect x="194" y="323" width="1" height="1"/><rect x="194" y="320" width="1" height="1"/><rect x="195" y="320" width="1" height="1"/><rect x="196" y="321" width="1" height="1"/><rect x="197" y="322" width="1" height="1"/><rect x="198" y="323" width="1" height="1"/><rect x="199" y="323" width="1" height="1"/><rect x="199" y="322" width="1" height="1"/><rect x="199" y="321" width="1" height="1"/><rect x="199" y="320" width="1" height="1"/><rect x="193" y="316" width="1" height="1"/><rect x="193" y="315" width="1" height="1"/><rect x="194" y="317" width="1" height="1"/><rect x="194" y="314" width="1" height="1"/><rect x="195" y="317" width="1" height="1"/><rect x="195" y="314" width="1" height="1"/><rect x="196" y="317" width="1" height="1"/><rect x="196" y="314" width="1" height="1"/><rect x="197" y="317" width="1" height="1"/><rect x="197" y="314" width="1" height="1"/><rect x="198" y="317" width="1" height="1"/><rect x="198" y="314" width="1" height="1"/><rect x="199" y="316" width="1" height="1"/><rect x="199" y="315" width="1" height="1"/><rect x="193" y="310" width="1" height="1"/><rect x="193" y="309" width="1" height="1"/><rect x="194" y="311" width="1" height="1"/><rect x="194" y="308" width="1" height="1"/><rect x="195" y="311" width="1" height="1"/><rect x="195" y="308" width="1" height="1"/><rect x="196" y="311" width="1" height="1"/><rect x="196" y="308" width="1" height="1"/><rect x="197" y="311" width="1" height="1"/><rect x="197" y="308" width="1" height="1"/><rect x="198" y="311" width="1" height="1"/><rect x="198" y="308" width="1" height="1"/><rect x="199" y="310" width="1" height="1"/><rect x="199" y="309" width="1" height="1"/><rect x="193" y="423" width="1" height="1"/><rect x="193" y="422" width="1" height="1"/><rect x="193" y="421" width="1" height="1"/><rect x="194" y="420" width="1" height="1"/><rect x="195" y="420" width="1" height="1"/><rect x="196" y="422" width="1" height="1"/><rect x="196" y="421" width="1" height="1"/><rect x="197" y="420" width="1" height="1"/><rect x="198" y="420" width="1" height="1"/><rect x="199" y="423" width="1" height="1"/><rect x="199" y="422" width="1" height="1"/><rect x="199" y="421" width="1" height="1"/><rect x="193" y="416" width="1" height="1"/><rect x="193" y="415" width="1" height="1"/><rect x="194" y="417" width="1" height="1"/><rect x="194" y="414" width="1" height="1"/><rect x="195" y="417" width="1" height="1"/><rect x="195" y="414" width="1" height="1"/><rect x="196" y="417" width="1" height="1"/><rect x="196" y="414" width="1" height="1"/><rect x="197" y="417" width="1" height="1"/><rect x="197" y="414" width="1" height="1"/><rect x="198" y="417" width="1" height="1"/><rect x="198" y="414" width="1" height="1"/><rect x="199" y="416" width="1" height="1"/><rect x="199" y="415" width="1" height="1"/><rect x="193" y="410" width="1" height="1"/><rect x="193" y="409" width="1" height="1"/><rect x="194" y="411" width="1" height="1"/><rect x="194" y="408" width="1" height="1"/><rect x="195" y="411" width="1" height="1"/><rect x="195" y="408" width="1" height="1"/><rect x="196" y="411" width="1" height="1"/><rect x="196" y="408" width="1" height="1"/><rect x="197" y="411" width="1" height="1"/><rect x="197" y="408" width="1" height="1"/><rect x="198" y="411" width="1" height="1"/><rect x="198" y="408" width="1" height="1"/><rect x="199" y="410" width="1" height="1"/><rect x="199" y="409" width="1" height="1"/><rect x="193" y="521" width="1" height="1"/><rect x="194" y="522" width="1" height="1"/><rect x="194" y="521" width="1" height="1"/><rect x="195" y="523" width="1" height="1"/><rect x="195" y="521" width="1" height="1"/><rect x="196" y="524" width="1" height="1"/><rect x="196" y="521" width="1" height="1"/><rect x="197" y="524" width="1" height="1"/><rect x="197" y="523" width="1" height="1"/><rect x="197" y="522" width="1" height="1"/><rect x="197" y="521" width="1" height="1"/><rect x="197" y="520" width="1" height="1"/><rect x="198" y="521" width="1" height="1"/><rect x="199" y="521" width="1" height="1"/><rect x="193" y="516" width="1" height="1"/><rect x="193" y="515" width="1" height="1"/><rect x="194" y="517" width="1" height="1"/><rect x="194" y="514" width="1" height="1"/><rect x="195" y="517" width="1" height="1"/><rect x="195" y="514" width="1" height="1"/><rect x="196" y="517" width="1" height="1"/><rect x="196" y="514" width="1" height="1"/><rect x="197" y="517" width="1" height="1"/><rect x="197" y="514" width="1" height="1"/><rect x="198" y="517" width="1" height="1"/><rect x="198" y="514" width="1" height="1"/><rect x="199" y="516" width="1" height="1"/><rect x="199" y="515" width="1" height="1"/><rect x="193" y="510" width="1" height="1"/><rect x="193" y="509" width="1" height="1"/><rect x="194" y="511" width="1" height="1"/><rect x="194" y="508" width="1" height="1"/><rect x="195" y="511" width="1" height="1"/><rect x="195" y="508" width="1" height="1"/><rect x="196" y="511" width="1" height="1"/><rect x="196" y="508" width="1" height="1"/><rect x="197" y="511" width="1" height="1"/><rect x="197" y="508" width="1" height="1"/><rect x="198" y="511" width="1" height="1"/><rect x="198" y="508" width="1" height="1"/><rect x="199" y="510" width="1" height="1"/><rect x="199" y="509" width="1" height="1"/></g></svg>

<!-- PHONE -->
<div class="a" style="left:240px;top:127px;width:253px;height:422px;background:#fafafa"></div>
<div class="a" style="left:240px;top:127px;width:253px;height:16px;background:#303f9f"></div>
<div class="a" style="left:240px;top:143px;width:253px;height:37px;background:#3f51b5"></div>
<div class="a" style="left:240px;top:517px;width:253px;height:32px;background:#000"></div>
<div class="a" style="left:240px;top:517px;width:253px;height:1px;background:#777"></div>
<div class="t" style="left:251px;top:154px;font-size:13.5px;color:#fff;-webkit-text-stroke:0.35px #fff">ConstraintLayoutTest</div>
<div class="t" style="left:470px;top:130px;font-size:10px;line-height:13px;color:#fff;-webkit-text-stroke:0.2px #fff">6:00</div>
<svg class="a" style="left:440px;top:127px" width="30" height="16" viewBox="0 0 30 16">
  <path d="M3 4.5 Q9.5 0.5 16 4.5 L9.5 13 Z" fill="#fff"/>
  <rect x="18" y="4" width="8" height="10" fill="#fff"/><rect x="20" y="3" width="4" height="1.5" fill="#fff"/>
</svg>
<svg class="a" style="left:240px;top:517px" width="253" height="32" viewBox="0 0 253 32">
  <path d="M45 10.5 L45 21.5 L34.5 16 Z" fill="none" stroke="#d8d8d8" stroke-width="1.3" stroke-linejoin="round"/>
  <circle cx="126.5" cy="16" r="5.4" fill="none" stroke="#d8d8d8" stroke-width="1.3"/>
  <rect x="208.6" y="11" width="10" height="10" rx="1" fill="none" stroke="#d8d8d8" stroke-width="1.3"/>
</svg>
<!-- dashed phone bounds -->
<svg class="a" style="left:0;top:0" width="776" height="557">
  <line x1="220" y1="126.5" x2="514" y2="126.5" stroke="#d0d0d0" stroke-width="1" stroke-dasharray="5 3"/>
  <line x1="220" y1="549.5" x2="514" y2="549.5" stroke="#d0d0d0" stroke-width="1" stroke-dasharray="5 3"/>
  <line x1="239.5" y1="107" x2="239.5" y2="557" stroke="#d0d0d0" stroke-width="1" stroke-dasharray="5 3"/>
  <line x1="493.5" y1="107" x2="493.5" y2="557" stroke="#d0d0d0" stroke-width="1" stroke-dasharray="5 3"/>
</svg>
<!-- BLUEPRINT -->
<div class="a" style="left:503px;top:127px;width:253px;height:422px;background:#11316e"></div>
<svg class="a" style="left:0;top:0" width="776" height="557">
  <line x1="503" y1="180.5" x2="756" y2="180.5" stroke="#6ea2dc" stroke-width="1" stroke-dasharray="8.5 7.5"/>
  <line x1="503" y1="517.5" x2="756" y2="517.5" stroke="#6ea2dc" stroke-width="1" stroke-dasharray="8.5 7.5"/>
  <line x1="503.5" y1="180" x2="503.5" y2="518" stroke="#6ea2dc" stroke-width="1"/>
  <line x1="756.5" y1="180" x2="756.5" y2="518" stroke="#6ea2dc" stroke-width="1"/>
</svg>


<svg class="a" style="left:161px;top:383px" width="16" height="22" viewBox="0 0 16 22">
  <path d="M2 2 L2 16.5 L5.5 13 L8 18.5 L10.3 17.5 L8 12.3 L13 12.3 Z" fill="#000" stroke="#fff" stroke-width="1.2" stroke-linejoin="round"/>
</svg>

<svg class="a" style="left:0;top:0" width="776" height="557">
  <path d="M510 557 L516 551" stroke="#c0c0c0" stroke-width="1" stroke-dasharray="1 1.2"/>
</svg>
<div class="a" style="left:775px;top:0;width:1px;height:557px;background:#2b2b2b"></div>
</body></html>
